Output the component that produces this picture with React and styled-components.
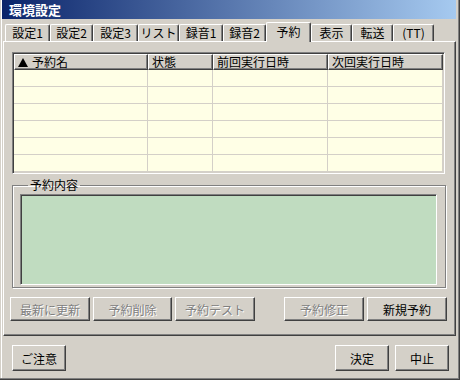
import React from 'react';
import styled, { createGlobalStyle } from 'styled-components';

const GlobalStyle = createGlobalStyle`
    html, body {
        margin: 0;
        padding: 0;
        background: #d4d0c8;
    }
    body {
        font-family: "Noto Sans CJK JP", "Liberation Sans", sans-serif;
        font-size: 12px;
        color: #000;
    }
`

const Window = styled.div`
    width: 460px;
    height: 380px;
    box-sizing: border-box;
    background: #d4d0c8;
    padding: 0 4px 4px 2px;
    display: flex;
    flex-direction: column;
    box-shadow: inset -1px -1px #404040, inset -2px -2px #808080, inset 1px 0 #d4d0c8, inset 2px 0 #ffffff;
`

const TitleBar = styled.div`
    height: 19px;
    background: linear-gradient(to right, #0a246a, #a6caf0);
    color: #fff;
    font-weight: bold;
    font-size: 13px;
    line-height: 19px;
    padding-left: 7px;
`

const Body = styled.div`
    padding: 3px 0 0 1px;
    display: flex;
    flex-direction: column;
`

const TabStrip = styled.div`
    display: flex;
    height: 19px;
    padding-left: 2px;
    position: relative;
    z-index: 1;
`

const Tab = styled.div`
    box-sizing: border-box;
    width: ${p => p.$w}px;
    height: ${p => (p.$active ? 20 : 17)}px;
    margin-top: ${p => (p.$active ? 0 : 2)}px;
    background: #d4d0c8;
    border-top: 1px solid #fff;
    border-left: 1px solid #fff;
    border-right: 1px solid #404040;
    border-radius: 2px 2px 0 0;
    box-shadow: inset -1px 0 #808080;
    text-align: center;
    line-height: ${p => (p.$active ? 18 : 16)}px;
    font-size: 12px;
    white-space: nowrap;
`

const Panel = styled.div`
    box-sizing: border-box;
    height: 295px;
    border-top: 1px solid #fff;
    border-left: 1px solid #fff;
    border-right: 1px solid #404040;
    border-bottom: 1px solid #404040;
    box-shadow: inset -1px -1px #808080;
    padding: 10px 9px 0 8px;
    display: flex;
    flex-direction: column;
`

const ListView = styled.div`
    box-sizing: border-box;
    height: 122px;
    margin-right: 1px;
    border-top: 1px solid #808080;
    border-left: 1px solid #808080;
    border-right: 1px solid #fff;
    border-bottom: 1px solid #fff;
    box-shadow: inset 1px 1px #404040, inset -1px -1px #d4d0c8;
    padding: 1px;
    background: #ffffe6;
    overflow: hidden;
`

const Row = styled.div`
    display: grid;
    grid-template-columns: 134px 65px 115px 115px;
`

const HeaderCell = styled.div`
    box-sizing: border-box;
    height: 16px;
    background: #d4d0c8;
    border-top: 1px solid #fff;
    border-left: 1px solid #fff;
    border-right: 1px solid #404040;
    border-bottom: 1px solid #404040;
    box-shadow: inset -1px -1px #808080;
    padding-left: 3px;
    line-height: 14px;
    display: flex;
    align-items: center;
    gap: 4px;
    white-space: nowrap;
`

const Cell = styled.div`
    height: 17px;
    box-sizing: border-box;
    border-right: 1px solid #d4d0c8;
    border-bottom: 1px solid #d4d0c8;
`

const GroupBox = styled.fieldset`
    box-sizing: border-box;
    height: 109px;
    margin: 5px 0 0 0;
    padding: 3px 8px 8px 7px;
    border: 1px solid #808080;
    box-shadow: 1px 1px #fff, inset 1px 1px #fff;
    min-width: 0;
`

const Legend = styled.legend`
    margin-left: 8px;
    padding: 0 2px;
    line-height: 12px;
    font-size: 12px;
`

const Memo = styled.div`
    height: 91px;
    box-sizing: border-box;
    background: #c0dcc0;
    border-top: 1px solid #808080;
    border-left: 1px solid #808080;
    border-right: 1px solid #fff;
    border-bottom: 1px solid #fff;
    box-shadow: inset 1px 1px #404040;
`

const ButtonRow = styled.div`
    display: flex;
    gap: 3px;
    margin: 9px -1px 0 -2px;
`

const Spacer = styled.div`
    flex: 1;
`

const Button = styled.button`
    box-sizing: border-box;
    width: ${p => p.$w}px;
    height: ${p => p.$h}px;
    padding: 0;
    margin: 0;
    background: #d4d0c8;
    border-top: 1px solid #fff;
    border-left: 1px solid #fff;
    border-right: 1px solid #404040;
    border-bottom: 1px solid #404040;
    border-radius: 0;
    box-shadow: inset -1px -1px #808080;
    font-family: inherit;
    font-size: 12px;
    color: ${p => (p.disabled ? '#808080' : '#000')};
    text-shadow: ${p => (p.disabled ? '1px 1px #fff' : 'none')};
`

const Footer = styled.div`
    display: flex;
    gap: 6px;
    padding: 9px 7px 0 9px;
`

const tabs = [
    ['設定1', 45], ['設定2', 43], ['設定3', 45], ['リスト', 41], ['録音1', 44],
    ['録音2', 43], ['予約', 45], ['表示', 41], ['転送', 41], ['(TT)', 41],
]

const columns = ['予約名', '状態', '前回実行日時', '次回実行日時']

const SortArrow = () => (
    <svg width="10" height="9" viewBox="0 0 10 9">
        <path d="M5 0 L10 9 L0 9 Z" fill="#000" />
    </svg>
)

const App = () => {
    return (
        <Window>
            <GlobalStyle />
            <TitleBar>環境設定</TitleBar>
            <Body>
                <TabStrip>
                    {tabs.map(([label, w]) => (
                        <Tab key={label} $w={w} $active={label === '予約'}>{label}</Tab>
                    ))}
                </TabStrip>
                <Panel>
                    <ListView>
                        <Row>
                            {columns.map((c, i) => (
                                <HeaderCell key={c}>
                                    {i === 0 && <SortArrow />}
                                    {c}
                                </HeaderCell>
                            ))}
                        </Row>
                        {[0, 1, 2, 3, 4, 5].map(r => (
                            <Row key={r}>
                                {columns.map(c => <Cell key={c} />)}
                            </Row>
                        ))}
                    </ListView>
                    <GroupBox>
                        <Legend>予約内容</Legend>
                        <Memo />
                    </GroupBox>
                    <ButtonRow>
                        <Button $w={80} $h={24} disabled>最新に更新</Button>
                        <Button $w={79} $h={24} disabled>予約削除</Button>
                        <Button $w={80} $h={24} disabled>予約テスト</Button>
                        <Spacer />
                        <Button $w={80} $h={24} disabled>予約修正</Button>
                        <Button $w={80} $h={24}>新規予約</Button>
                    </ButtonRow>
                </Panel>
                <Footer>
                    <Button $w={54} $h={26}>ご注意</Button>
                    <Spacer />
                    <Button $w={54} $h={26}>決定</Button>
                    <Button $w={54} $h={26}>中止</Button>
                </Footer>
            </Body>
        </Window>
    )
}

export default App;
